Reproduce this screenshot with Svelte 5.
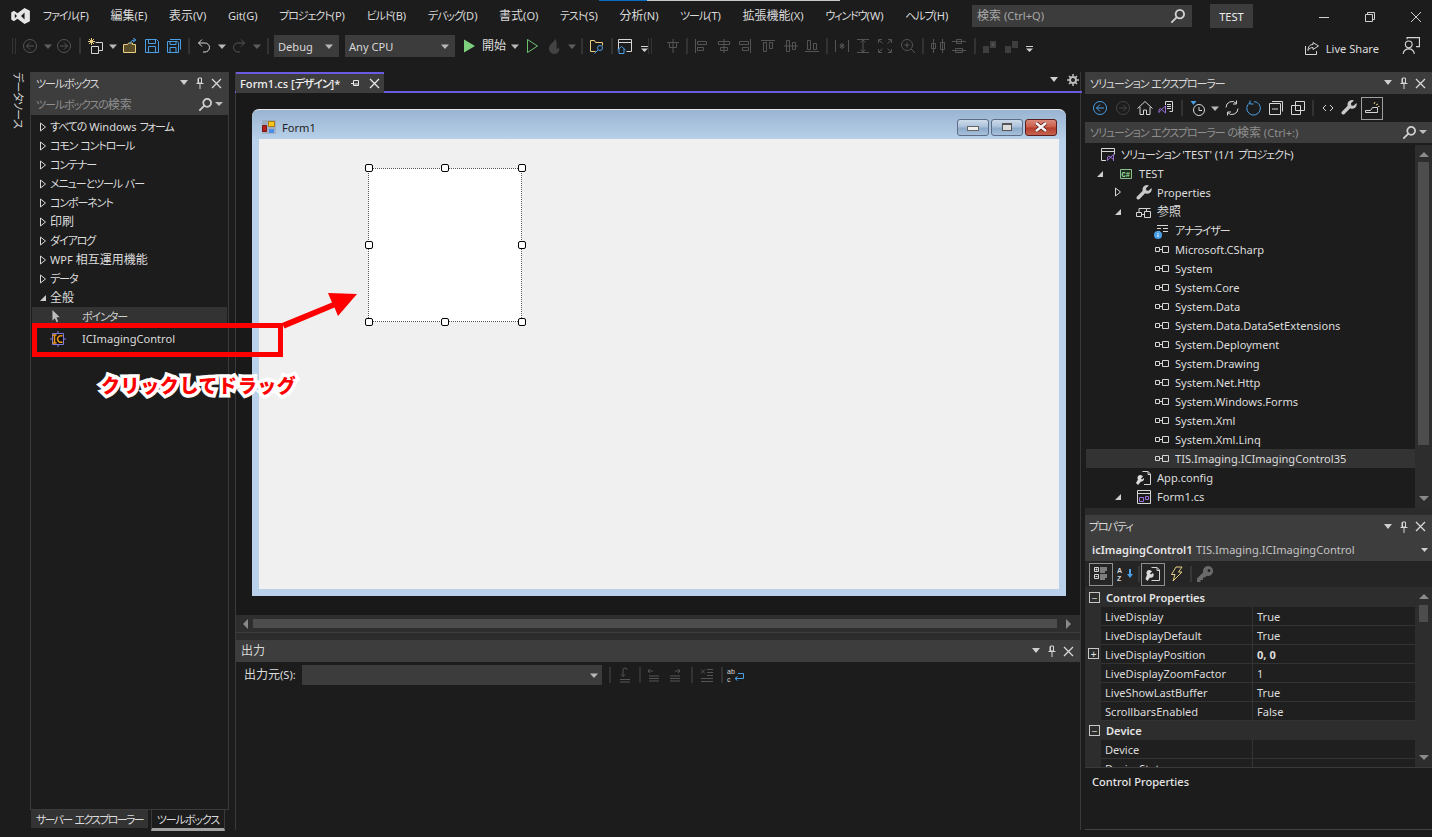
<script>
  const W = '#d6d6d6', D = '#545454', B = '#4a9fe6', Y = '#e9cf82', P = '#9b6fd8', G = '#6cc36c';

  const dots = Array.from({ length: 8 }, (_, i) => `M1 ${i * 2 + 1}h1M4 ${i * 2 + 1}h1`).join('');

  // each icon: list of [stroke, fill, d] in a 16x16 box
  const ico = {
    back: [[D, 'none', 'M14.5 8a6.5 6.5 0 1 1-13 0a6.5 6.5 0 1 1 13 0zM12 8H4.5M8 4.5L4.5 8 8 11.5']],
    fwd: [[D, 'none', 'M14.5 8a6.5 6.5 0 1 1-13 0a6.5 6.5 0 1 1 13 0zM4 8h7.5M8 4.5L11.5 8 8 11.5']],
    backB: [[B, 'none', 'M14.5 8a6.5 6.5 0 1 1-13 0a6.5 6.5 0 1 1 13 0zM12 8H4.5M8 4.5L4.5 8 8 11.5']],
    fwdD: [['#444', 'none', 'M14.5 8a6.5 6.5 0 1 1-13 0a6.5 6.5 0 1 1 13 0zM4 8h7.5M8 4.5L11.5 8 8 11.5']],
    arr: [['none', '#b8b8b8', 'M4 6.5h8L8 11z']],
    arrD: [['none', '#5e5e5e', 'M4 6.5h8L8 11z']],
    dd: [['#cfcfcf', 'none', 'M4 8.5h7'], ['none', '#cfcfcf', 'M4 10.5h7L7.5 14z']],
    grip: [['#4d4d4d', 'none', dots]],
    sep: [['#4a4a4a', 'none', 'M8 0v16']],
    newp: [[Y, 'none', 'M3.5 0v7M0 3.5h7M1 1l5 5M6 1L1 6'], [W, 'none', 'M7.5 4.5h7v8h-4M3.5 8.5h7v7h-7z']],
    open: [[Y, '#5a4d28', 'M1.5 14.5v-8h4l1-1.5h4v1.5h3v8z'], [B, 'none', 'M8 6c0-2.5 2-4 5-4M11 0l3 2-3 2']],
    save: [[B, 'none', 'M1.5 1.5h11l2 2v11h-13zM4.5 1.5v4h7v-4M4.5 14.5v-6h7v6']],
    saveall: [[B, 'none', 'M1.5 3.5h10l1 1v10h-11zM4 3.5v3h6v-3M4 14.5v-5h6v5M4 1.5h10.5v10']],
    undo: [[W, 'none', 'M6 1.5L2.5 5 6 8.5M2.5 5h6.5a4.5 4.5 0 0 1 0 9H7']],
    redo: [[D, 'none', 'M10 1.5L13.5 5 10 8.5M13.5 5H7a4.5 4.5 0 0 0 0 9h2']],
    play: [['none', '#7ed07e', 'M3 1.5L14 8 3 14.5z']],
    playo: [[G, 'none', 'M3.5 1.5L13.5 8 3.5 14.5z']],
    flame: [['none', '#434343', 'M9 0c1 3.5-5 5-6 9.5C2.5 13 5 16 8.5 16s5.5-3 4.5-7c-.5 1.5-1.5 2-2.5 1.5C11 7 11 3 9 0z']],
    findf: [[Y, 'none', 'M1.5 13.5v-11h4l1 2h7v3M1.5 13.5h5'], [B, 'none', 'M13.5 10a2.5 2.5 0 1 1-5 0a2.5 2.5 0 1 1 5 0zM9 12l-3.5 3.5']],
    formh: [[W, 'none', 'M1.5 11V1.5h13v12h-5M1.5 4.5h13'], [B, 'none', 'M.5 12L4.5 8.5 8.5 12M2 11v4.5h5V11']],
    tab: [[D, 'none', 'M8 1v14M2 4.5h12M4.5 4.5v5h7v-5']],
    a1: [[D, 'none', 'M2.5 1v14M4.5 3.5h9v3h-9zM4.5 9.5h6v3h-6z']],
    a2: [[D, 'none', 'M8 1v14M2.5 3.5h11v3h-11zM4.5 9.5h7v3h-7z']],
    a3: [[D, 'none', 'M13.5 1v14M2.5 3.5h9v3h-9zM5.5 9.5h6v3h-6z']],
    a4: [[D, 'none', 'M1 2.5h14M3.5 4.5v9h3v-9zM9.5 4.5v6h3v-6z']],
    a5: [[D, 'none', 'M1 8h14M3.5 2.5v11h3v-11zM9.5 4.5v7h3v-7z']],
    a6: [[D, 'none', 'M1 13.5h14M3.5 2.5v9h3v-9zM9.5 5.5v6h3v-6z']],
    b1: [[D, 'none', 'M1.5 2v12M14.5 2v12M8 5v6M5.5 8h5M6 6l4 4M10 6l-4 4']],
    b2: [[D, 'none', 'M2 1.5h12M2 14.5h12M8 2v12M5.5 4.5L8 2l2.5 2.5M5.5 11.5L8 14l2.5-2.5']],
    b3: [[D, 'none', 'M1.5 5V1.5H5M11 1.5h3.5V5M14.5 11v3.5H11M5 14.5H1.5V11M2 2l3.5 3.5M14 2l-3.5 3.5M2 14l3.5-3.5M14 14l-3.5-3.5']],
    b4: [[D, 'none', 'M12.5 7a5.5 5.5 0 1 1-11 0a5.5 5.5 0 1 1 11 0zM11 11l4 4M4.5 7h5M7 4.5v5']],
    c1: [[D, 'none', 'M3.5 1v14M12.5 1v14M1.5 5.5h4v5h-4zM10.5 4.5h4v7h-4z']],
    c2: [[D, 'none', 'M1 3.5h14M1 12.5h14M5.5 1.5v4h5v-4zM4.5 10.5v4h7v-4z']],
    o1: [['none', '#3e3e3e', 'M1 8h6v7H1zM8 3h6v7H8z'], ['#555', 'none', 'M10 5.5h2v2h-2z']],
    o2: [['none', '#3e3e3e', 'M1 8h6v7H1zM8 3h6v7H8z']],
    share: [[W, 'none', 'M9 2.5l5.5 3.5L9 9.5V7.5c-2.5 0-4 1-5 3 0-3.5 1.5-6 5-6zM1.5 6v8.5h11V11']],
    feed: [[W, 'none', 'M3 6.5a3 3 0 1 1 6 0a3 3 0 1 1-6 0zM1 15c.5-3 2-4.5 5-4.5s4.5 1.5 5 4.5M4.5 2V.5h11v8h-3']],
    home: [[W, 'none', 'M.5 8.5L8 1.5l7.5 7M3 7v7.5h3.5V10h3v4.5H13V7']],
    vsdocB: [[W, 'none', 'M7.5 5V1.5h7v10h-3M9 4.5h4M9 6.5h4M9 8.5h4'], [P, 'none', 'M1 9.5l1.5-1 5 4.5v-7l-5 4.5L1 12.5zM7.5 6v7']],
    hist: [[W, 'none', 'M14.5 10a5.5 5.5 0 1 1-11 0a5.5 5.5 0 1 1 11 0zM9 7v3.5h3'], ['none', B, 'M.5 1h6L3.5 5z']],
    sync: [[W, 'none', 'M2 7.5a6 6 0 0 1 10.5-4M14 8.5a6 6 0 0 1-10.5 4M12.5.5V4H9M3.5 15.5V12H7']],
    refresh: [[B, 'none', 'M4 2.5a6.8 6.8 0 1 0 4-1M4 .5V4h3.5']],
    coll: [[W, 'none', 'M1.5 3.5h11v11h-11zM4 9h6M4 1.5h10.5v10']],
    copy: [[W, 'none', 'M5.5 1.5h9v9h-9zM1.5 5.5h9v9h-9z']],
    code: [[W, 'none', 'M6 5L3 8l3 3M10 5l3 3-3 3']],
    wrench: [['none', '#c8c8c8', 'M11 0a4.5 4.5 0 0 0-4.3 5.8L.8 11.7a1.8 1.8 0 0 0 2.5 2.5l5.9-5.9A4.5 4.5 0 0 0 15.5 3l-3 2.8-2.2-.3-.3-2.2L13 .5A4.500 4.500 0 0 0 11 0z']],
    toggle: [[W, 'none', 'M1.5 10.5h5l2-3h5v3M1.5 10.5v2h12v-2'], [Y, 'none', 'M12 5l2-1M10 4l1-2M14 6.5h1.5']],
    key: [['none', '#6a6a6a', 'M11 0a5 5 0 0 0-4.8 6.300L0 12.500V16h3.500v-2H6v-2.500h2l1.700-1.700A5 5 0 1 0 11 0zm1 3a1.500 1.500 0 1 1 0 3 1.500 1.500 0 0 1 0-3z']],
    cat: [[W, 'none', 'M1.5 1.5h4v4h-4zM1.5 8.5h4v4h-4zM3.5 2.5v2M2.5 3.5h2M2.5 10.5h2M7 2h7M7 4h7M7 6h5M7 9h7M7 11h7M7 13h5']],
    propw: [[W, 'none', 'M6.5 1.5H12l2.5 2.5v10.5h-8M12 1.5v3h2.5'], ['none', '#dcdcdc', 'M4 4a2.800 2.800 0 0 0-2 4.500L.5 13l2 2 2.500-3.500A2.800 2.800 0 0 0 8 7L6 8.500 5 7.500 7 5.500A3 3 0 0 0 4 4z']],
    flash: [[Y, 'none', 'M8 1h6l-3.5 5H14L5 15l2-6.5H3.500z']],
    o_a: [[D, 'none', 'M3 15h10M3 12.5h10M6 9.5V3a2 2 0 0 1 4 0M4 7.5L6 9.5l2-2']],
    o_b: [[D, 'none', 'M3 14h10M3 11.5h10M3 9h10M7 4H2M4 2L2 4l2 2']],
    o_c: [[D, 'none', 'M3 14h10M3 11.5h10M3 9h10M8 4h5M11 2l2 2-2 2']],
    o_d: [[D, 'none', 'M2 14.5h12M2 11.5h12M8 8.5h6M8 5.5h6M8 2.5h6M2 2.5l4 4M6 2.5l-4 4']],
    depr: [[W, 'none', 'M.5 8.5h5v4h-5zM8.5 7.5h6v6h-6zM5.5 10.5h3M3 8.5v-4h7.5v3M10.5 4.5h4']],
    ref: [[W, 'none', 'M1.5 5.5h4v4h-4zM5.5 7.5h3M8.5 4.5h6v6h-6z']],
    anl: [[W, 'none', 'M3 2.5h11M3 5.5h4M9 5.5h5M3 8.5h3M9 8.5h5'], ['none', B, 'M8 12a4 4 0 1 1-8 0a4 4 0 1 1 8 0z'], ['#fff', 'none', 'M4 10v.8M4 11.5V14']],
    cfg: [[W, 'none', 'M6.5 1.5H12l2.5 2.5v10.5H8M12 1.5v3h2.5'], ['none', '#dcdcdc', 'M4 5a2.800 2.800 0 0 0-2 4.500L0 13l2 2 3-3.500A2.800 2.800 0 0 0 8 8L6 9.500 5 8.500 7 6.500A3 3 0 0 0 4 5z']],
    formf: [[W, 'none', 'M1.5 1.5h13v13h-13zM1.5 4.5h13'], [P, 'none', 'M3.5 8.5h4v4h-4zM9.5 7.5h3v3h-3z']],
    sln: [[W, 'none', 'M6 13.5H1.5v-12h13v6M1.5 4.5h13'], [P, 'none', 'M7.5 10L9 9l4.5 3.5v-5L9 11.5l-1.500 2zM13.500 7.500V14']],
    cursor: [['none', '#bdbdbd', 'M3 0v13l3-3 2 5 2-1-2-5h4z']],
  };

  const tools = [
    ['back', 20], ['arrD', 16], ['fwd', 16], ['sep', 16], ['newp', 16], ['arr', 18], ['open', 16], ['save', 28],
    ['saveall', 16], ['sep', 14], ['undo', 16], ['arr', 20], ['redo', 14], ['arrD', 21], ['sep', 1]
  ];
  const tools2 = [
    ['arr', 20], ['playo', 14], ['flame', 30], ['arrD', 6], ['sep', 14], ['findf', 16], ['sep', 14], ['formh', 12],
    [null, 10], ['dd', 8], ['grip', 12], ['tab', 24], ['sep', 4], ['a1', 24], ['a2', 22], ['a3', 20], ['a4', 25], ['a5', 22],
    ['a6', 20], ['sep', 10], ['b1', 20], ['b2', 22], ['b3', 22], ['b4', 23], ['sep', 8], ['c1', 22], ['c2', 20], ['sep', 12],
    ['o1', 18], ['o2', 26], ['dd', 10]
  ];
  const seTools = [
    ['backB', 16], ['fwdD', 30], ['home', 14], ['vsdocB', 28], ['sep', 4], ['hist', 28], ['arr', 6], ['sync', 28],
    ['refresh', 16], ['coll', 28], ['copy', 16], ['sep', 14], ['code', 16], ['wrench', 25]
  ];
  const outTools = [['sep', 1], ['o_a', 29], ['sep', 1], ['o_b', 28], ['o_c', 14], [null, 9], ['sep', 1], ['o_d', 29], ['sep', 1]];

  const menus = ['ファイル(F)', '編集(E)', '表示(V)', 'Git(G)', 'プロジェクト(P)', 'ビルド(B)', 'デバッグ(D)', '書式(O)',
    'テスト(S)', '分析(N)', 'ツール(T)', '拡張機能(X)', 'ウィンドウ(W)', 'ヘルプ(H)'];

  const boxCats = ['すべての Windows フォーム', 'コモン コントロール', 'コンテナー', 'メニューとツール バー', 'コンポーネント',
    '印刷', 'ダイアログ', 'WPF 相互運用機能', 'データ'];

  const refs = ['Microsoft.CSharp', 'System', 'System.Core', 'System.Data', 'System.Data.DataSetExtensions', 'System.Deployment',
    'System.Drawing', 'System.Net.Http', 'System.Windows.Forms', 'System.Xml', 'System.Xml.Linq', 'TIS.Imaging.ICImagingControl35'];

  const tree = [
    { lv: 0, icon: 'sln', t: "ソリューション 'TEST' (1/1 プロジェクト)" },
    { lv: 1, open: true, icon: 'cs', t: 'TEST' },
    { lv: 2, closed: true, icon: 'wrench', t: 'Properties' },
    { lv: 2, open: true, icon: 'depr', t: '参照' },
    { lv: 3, icon: 'anl', t: 'アナライザー' },
    ...refs.map((t) => ({ lv: 3, icon: 'ref', t, sel: t.startsWith('TIS') })),
    { lv: 2, icon: 'cfg', t: 'App.config' },
    { lv: 2, open: true, icon: 'formf', t: 'Form1.cs' },
  ];

  const props = [
    { sec: 'Control Properties' },
    { n: 'LiveDisplay', v: 'True' },
    { n: 'LiveDisplayDefault', v: 'True' },
    { n: 'LiveDisplayPosition', v: '0, 0', bold: true, plus: true },
    { n: 'LiveDisplayZoomFactor', v: '1' },
    { n: 'LiveShowLastBuffer', v: 'True' },
    { n: 'ScrollbarsEnabled', v: 'False' },
    { sec: 'Device' },
    { n: 'Device', v: '' },
    { n: 'DeviceState', v: '' },
  ];

  const handles = ['tl', 'tc', 'tr', 'ml', 'mr', 'bl', 'bc', 'br'];

  // the reference's UI font has compact kana, so kana runs get their own size
  function runs(s) {
    return s.split(/([\u3040-\u30ff]+|[\u4e00-\u9fff]+)/).filter(Boolean).map((p) => {
      if (/[\u3040-\u30ff]/.test(p)) return ['k', p];
      if (/[\u4e00-\u9fff]/.test(p)) return ['h', p];
      return ['', p];
    });
  }
</script>

{#snippet t(text)}
  <span class="tx">{#each runs(text) as [c, p]}<span class={c}>{p}</span>{/each}</span>
{/snippet}

{#snippet icon(name, size = 16)}
  <svg class="ic" width={size} height={size} viewBox="0 0 16 16">
    {#each ico[name] as [s, f, d]}
      <path stroke={s} fill={f} {d} />
    {/each}
  </svg>
{/snippet}

{#snippet bar(list)}
  {#each list as [name, w]}
    <span class="slot" style="width:{w}px">
      {#if name}{@render icon(name)}{/if}
    </span>
  {/each}
{/snippet}

{#snippet caption()}
  <span class="caps">
    <svg width="10" height="6" viewBox="0 0 10 6"><path d="M1 0h8L5 5z" fill="#cfcfcf" /></svg>
    <svg width="10" height="12" viewBox="0 0 10 12"><path d="M3.5 1h3v5h-3zM1.5 6.5h7M5 7v5M3 1.5v5" stroke="#d8d8d8" fill="none" /></svg>
    <svg width="11" height="11" viewBox="0 0 11 11"><path d="M1 1l9 9M10 1l-9 9" stroke="#d8d8d8" stroke-width="1.3" /></svg>
  </span>
{/snippet}

{#snippet opened()}
  <svg class="exp" width="8" height="8" viewBox="0 0 8 8"><path d="M7 1v6H1z" fill="#cfcfcf" /></svg>
{/snippet}

{#snippet closed()}
  <svg class="exp" width="8" height="10" viewBox="0 0 8 10"><path d="M1.5 1l5 4-5 4z" fill="none" stroke="#d8d8d8" /></svg>
{/snippet}

{#snippet sarrow(dir)}
  <svg width="10" height="7" viewBox="0 0 10 7"><path d={dir === 'up' ? 'M0 6l5-5 5 5z' : 'M0 1h10L5 6z'} fill="#8a8a8a" /></svg>
{/snippet}

{#snippet findIcon()}
  <span class="find">
    <svg width="14" height="14" viewBox="0 0 16 16"><path d="M15 5.5a4.5 4.5 0 1 1-9 0a4.5 4.5 0 1 1 9 0zM7 9l-5.5 5.5" stroke="#d0d0d0" stroke-width="2" fill="none" /></svg>
    <svg width="8" height="5" viewBox="0 0 8 5"><path d="M0 0h8L4 4z" fill="#bdbdbd" /></svg>
  </span>
{/snippet}

<div class="app">
  <header class="titlebar">
    <svg class="logo" width="20" height="16" viewBox="0 0 22 18">
      <path d="M0 5l3-2 4 3L15 0l6 3v12l-6 3-8-6-4 3-3-2zM4 6.5v5l2.5-2.5zM15 5l-4 4 4 4z" fill="#e6e6e6" fill-rule="evenodd" />
    </svg>
    <nav class="menu">
      {#each menus as m}<span class="mi">{@render t(m)}</span>{/each}
    </nav>
    <div class="qsearch">
      {@render t('検索 (Ctrl+Q)')}
      <svg width="15" height="15" viewBox="0 0 16 16"><path d="M15 5.5a4.5 4.5 0 1 1-9 0a4.5 4.5 0 1 1 9 0zM7 9l-5.5 5.5" stroke="#d0d0d0" stroke-width="2" fill="none" /></svg>
    </div>
    <div class="sol">{@render t('TEST')}</div>
    <div class="winctl">
      <svg width="12" height="12" viewBox="0 0 12 12"><path d="M1 6.5h10" stroke="#d0d0d0" /></svg>
      <svg width="12" height="12" viewBox="0 0 12 12"><path d="M1.5 3.5h7v7h-7zM3.5 3V1.5h7v7H9" stroke="#d0d0d0" fill="none" /></svg>
      <svg width="12" height="12" viewBox="0 0 12 12"><path d="M1 1l10 10M11 1L1 11" stroke="#d0d0d0" /></svg>
    </div>
    <i class="progress"></i>
  </header>

  <div class="toolbar">
    <span class="slot grip">{@render icon('grip')}</span>
    {@render bar(tools)}
    <div class="combo debug">{@render t('Debug')}{@render icon('arr')}</div>
    <div class="combo cpu">{@render t('Any CPU')}{@render icon('arr')}</div>
    <span class="slot" style="width:27px">{@render icon('play')}</span>
    <span class="start">{@render t('開始')}</span>
    {@render bar(tools2)}
    <div class="live">
      {@render icon('share')}
      {@render t('Live Share')}
      <span class="feed">{@render icon('feed', 18)}</span>
    </div>
  </div>

  <main class="main">
    <div class="strip"><span class="vert">{#each runs('データソース') as [c, p]}<span class={c}>{p}</span>{/each}</span></div>

    <section class="left">
      <div class="boxed">
        <div class="phead">{@render t('ツールボックス')}{@render caption()}</div>
        <div class="psearch">{@render t('ツールボックスの検索')}{@render findIcon()}</div>
        <div class="boxtree">
          {#each boxCats as c}
            <div class="brow">{@render closed()}{@render t(c)}</div>
          {/each}
          <div class="brow">{@render opened()}{@render t('全般')}</div>
          <div class="bitem pointer"><span class="bicon">{@render icon('cursor', 13)}</span>{@render t('ポインター')}</div>
          <div class="bitem big">
            <span class="bicon">
              <svg width="16" height="16" viewBox="0 0 16 16">
                <path d="M2.5 2.5h11v11h-11zM8 0v2M8 14v2M0 8h2M14 8h2" fill="#111" stroke="#7c7ce0" />
                <path d="M4.5 4v8M6.5 12h-4M6.5 4h-4M12.5 5a3.5 3.5 0 0 0-5 3 3.5 3.5 0 0 0 5 3" stroke="#f09a1a" stroke-width="1.5" fill="none" />
              </svg>
            </span>
            {@render t('ICImagingControl')}
          </div>
        </div>
      </div>
      <div class="btabs">
        <span class="btab wide">{@render t('サーバー エクスプローラー')}</span>
        <span class="btab on">{@render t('ツールボックス')}</span>
      </div>
    </section>

    <section class="center">
      <div class="tabs">
        <div class="tab">
          <span class="tname">{@render t('Form1.cs [デザイン]*')}</span>
          <svg width="9" height="9" viewBox="0 0 9 9"><path d="M0 4.5h2.5M2.5 1.5h5v5h-5zM2.5 5h5" stroke="#e8e8e8" fill="none" /></svg>
          <svg width="11" height="11" viewBox="0 0 11 11"><path d="M1 1l9 9M10 1l-9 9" stroke="#e8e8e8" stroke-width="1.3" /></svg>
        </div>
        <div class="tabtools">
          <svg width="10" height="6" viewBox="0 0 10 6"><path d="M1 0h8L5 5z" fill="#cfcfcf" /></svg>
          <svg width="12" height="12" viewBox="0 0 12 12"><circle cx="6" cy="6" r="3" fill="none" stroke="#bdbdbd" stroke-width="2" /><path d="M6 0v2M6 10v2M0 6h2M10 6h2M2 2l1.5 1.5M10 2L8.5 3.5M2 10l1.5-1.5M10 10L8.5 8.5" stroke="#bdbdbd" stroke-width="1.5" /></svg>
        </div>
      </div>

      <div class="designer">
        <div class="form">
          <div class="ftitle">
            <svg width="15" height="14" viewBox="0 0 15 14">
              <path d="M0 0h14v14H0z" fill="#888" opacity=".35" />
              <path d="M6.5 1.5h6v5h-6z" fill="#f5c518" stroke="#a9781a" />
              <path d="M.5 5.5h4v6h-4z" fill="#b8201e" stroke="#7a1513" />
              <path d="M7 9h5v4H7z" fill="#4b8fe8" />
            </svg>
            <span class="fname">{@render t('Form1')}</span>
            <div class="fbtns">
              <span class="fbtn"><i class="fmin"></i></span>
              <span class="fbtn"><i class="fmax"></i></span>
              <span class="fbtn fclose">
                <svg width="16" height="10" viewBox="0 0 16 10"><path d="M3 1l10 8M13 1L3 9" stroke="#5a1510" stroke-width="4" /><path d="M3 1l10 8M13 1L3 9" stroke="#f5f5f5" stroke-width="2.6" /></svg>
              </span>
            </div>
          </div>
          <div class="client">
            <div class="control">
              {#each handles as h}<i class="handle {h}"></i>{/each}
            </div>
          </div>
        </div>
      </div>

      <div class="hscroll">
        <svg width="7" height="10" viewBox="0 0 7 10"><path d="M6 0v10L1 5z" fill="#8a8a8a" /></svg>
        <span class="hthumb"></span>
        <svg width="7" height="10" viewBox="0 0 7 10"><path d="M1 0v10l5-5z" fill="#8a8a8a" /></svg>
      </div>
      <div class="band"></div>

      <div class="output">
        <div class="phead">{@render t('出力')}{@render caption()}</div>
        <div class="otools">
          <span class="olabel">{@render t('出力元(S):')}</span>
          <div class="ocombo">{@render icon('arr')}</div>
          <div class="obar">
            {@render bar(outTools)}
            <span class="slot wrapico">
              <svg width="18" height="16" viewBox="0 0 18 16">
                <text x="0" y="6.5" class="mini">ab</text><text x="0" y="14.5" class="mini">c</text>
                <path d="M11 6.5h5.5v5H8M10.5 9.5L8 11.5l2.5 2" stroke={B} fill="none" />
              </svg>
            </span>
          </div>
        </div>
        <div class="obody"></div>
      </div>
    </section>

    <section class="right">
      <div class="se">
        <div class="phead">{@render t('ソリューション エクスプローラー')}{@render caption()}</div>
        <div class="setools">
          {@render bar(seTools)}
          <span class="active">{@render icon('toggle')}</span>
        </div>
        <div class="psearch">{@render t('ソリューション エクスプローラー の検索 (Ctrl+:)')}{@render findIcon()}</div>
        <div class="setree">
          <div class="serows">
            {#each tree as r}
              <div class="srow" class:sel={r.sel} style="padding-left:{r.lv ? 18 * r.lv - 10 : 14}px">
                {#if r.lv}
                  <span class="sexp">{#if r.open}{@render opened()}{:else if r.closed}{@render closed()}{/if}</span>
                {/if}
                {#if r.icon === 'cs'}
                  <svg class="ic" width="16" height="16" viewBox="0 0 16 16">
                    <path d="M2.5 3.5h11v9h-11z" fill="#1e2e1e" stroke="#8fbf8f" />
                    <text x="3.5" y="10.5" class="csharp">C#</text>
                  </svg>
                {:else}
                  {@render icon(r.icon)}
                {/if}
                <span class="stext">{@render t(r.t)}</span>
              </div>
            {/each}
          </div>
          <div class="vscroll">
            {@render sarrow('up')}
            <span class="vthumb long"></span>
            {@render sarrow('down')}
          </div>
        </div>
      </div>
      <div class="band"></div>
      <div class="props">
        <div class="phead tall">{@render t('プロパティ')}{@render caption()}</div>
        <div class="pselect">
          <b>{@render t('icImagingControl1')}</b>
          <span class="ptype">{@render t('TIS.Imaging.ICImagingControl')}</span>
          <svg width="7" height="4" viewBox="0 0 7 4"><path d="M0 0h7L3.5 4z" fill="#cfcfcf" /></svg>
        </div>
        <div class="ptools">
          <span class="pbox">{@render icon('cat')}</span>
          <span class="slot az">
            <svg width="18" height="16" viewBox="0 0 18 16">
              <text x="1" y="7" class="azt">A</text><text x="1" y="15" class="azt">Z</text>
              <path d="M11 8h2V3h2v5h2l-3 4z" fill={B} />
            </svg>
          </span>
          <span class="slot psep">{@render icon('sep')}</span>
          <span class="pbox">{@render icon('propw')}</span>
          <span class="slot" style="width:22px">{@render icon('flash')}</span>
          <span class="slot" style="width:8px">{@render icon('sep')}</span>
          <span class="slot" style="width:20px">{@render icon('key')}</span>
        </div>
        <div class="pgrid">
          <div class="plist">
            {#each props as p}
              {#if p.sec}
                <div class="psec"><span class="tog">−</span><b>{@render t(p.sec)}</b></div>
              {:else}
                <div class="prow">
                  {#if p.plus}<span class="tog plus">+</span>{/if}
                  <span class="pn">{@render t(p.n)}</span>
                  <span class="pv" class:strong={p.bold}>{@render t(p.v)}</span>
                </div>
              {/if}
            {/each}
          </div>
          <div class="vscroll">
            {@render sarrow('up')}
            <span class="vthumb"></span>
            {@render sarrow('down')}
          </div>
        </div>
        <div class="pdesc"><b>{@render t('Control Properties')}</b></div>
      </div>
    </section>
  </main>

  <svg class="overlay" width="1432" height="837" viewBox="0 0 1432 837">
    <path d="M34.5 325.5h246v29h-246z" fill="none" stroke="#ff0000" stroke-width="5" />
    <path d="M282 323l50-20.5-4-9.5 29 1-19 22-3.5-8.5-50 21z" fill="#ff0000" />
  </svg>
  <div class="callout">クリックしてドラッグ</div>
</div>

<style>
  :global(body) {
    margin: 0;
    background: #1c1c1c;
  }
  .app {
    position: relative;
    width: 1432px;
    height: 837px;
    overflow: hidden;
    display: flex;
    flex-direction: column;
    background: #1c1c1c;
    color: #dcdcdc;
    font: 11.1px/1.2 "Noto Sans", "Noto Sans CJK JP", sans-serif;
    font-feature-settings: "palt";
  }
  .tx {
    display: inline-block;
    padding-top: 1px;
    white-space: nowrap;
  }
  .k { font-size: 11px; letter-spacing: -1.1px; }
  .h { font-size: 12px; }
  .ic { display: block; flex: none; fill: none; }
  .slot {
    display: flex;
    align-items: center;
    justify-content: center;
    flex: none;
    height: 16px;
  }

  .titlebar {
    position: relative;
    height: 32px;
    flex: none;
    display: flex;
    align-items: center;
  }
  .logo { margin-left: 11px; flex: none; }
  .menu { display: flex; margin-left: 1px; width: 940px; }
  .mi { padding: 0 10.8px; white-space: nowrap; color: #dadada; }
  .qsearch {
    position: absolute;
    left: 972px;
    top: 5px;
    width: 220px;
    height: 22px;
    box-sizing: border-box;
    padding: 0 7px 0 5px;
    background: #3c3c3c;
    color: #a8a8a8;
    display: flex;
    align-items: center;
    justify-content: space-between;
  }
  .sol {
    position: absolute;
    left: 1210px;
    top: 4px;
    width: 43px;
    height: 24px;
    background: #3c3c3c;
    color: #ececec;
    display: flex;
    align-items: center;
    justify-content: center;
  }
  .winctl {
    position: absolute;
    right: 10px;
    top: 11px;
    display: flex;
    gap: 34px;
  }
  .progress {
    position: absolute;
    left: 599px;
    top: 0;
    width: 241px;
    height: 1px;
    background: linear-gradient(90deg, #0a6cc4 48px, #c8c8c8 48px);
  }

  .toolbar {
    height: 32px;
    flex: none;
    display: flex;
    align-items: center;
    padding-left: 11px;
    margin-top: -2px;
  }
  .grip { width: 9px; justify-content: flex-start; }
  .combo {
    display: flex;
    align-items: center;
    justify-content: space-between;
    box-sizing: border-box;
    height: 22px;
    padding: 0 2px 0 4px;
    background: #3c3c3c;
    color: #d8d8d8;
    flex: none;
  }
  .debug { width: 65px; margin-left: 6px; }
  .cpu { width: 110px; margin-left: 6px; }
  .start { width: 23px; flex: none; white-space: nowrap; }
  .live {
    margin-left: auto;
    margin-top: 4px;
    display: flex;
    align-items: center;
    gap: 6px;
    padding-right: 12px;
    color: #dcdcdc;
  }
  .feed { margin-left: 17px; margin-top: -4px; }

  .main {
    flex: 1;
    display: flex;
    padding: 10px 0 7px;
    min-height: 0;
  }
  .strip {
    width: 30px;
    flex: none;
    box-sizing: border-box;
    padding-left: 12px;
  }
  .vert {
    display: block;
    writing-mode: vertical-rl;
    text-orientation: sideways;
    color: #d4d4d4;
    white-space: nowrap;
  }
  .vert .k { letter-spacing: -.6px; }

  .phead {
    display: flex;
    align-items: center;
    justify-content: space-between;
    height: 22px;
    flex: none;
    padding: 0 5px;
    background: #3d3d3d;
    color: #d8d8d8;
    white-space: nowrap;
  }
  .phead.tall { height: 23px; padding-left: 4px; }
  .caps {
    display: flex;
    align-items: center;
    gap: 6px;
    padding-right: 1px;
  }
  .psearch {
    display: flex;
    align-items: center;
    justify-content: space-between;
    height: 21px;
    flex: none;
    padding: 0 5px;
    background: #3d3d3d;
    color: #8f8f8f;
    white-space: nowrap;
  }
  .find { display: flex; align-items: center; gap: 3px; }

  .left {
    width: 199px;
    flex: none;
    display: flex;
    flex-direction: column;
  }
  .boxed {
    flex: 1;
    min-height: 0;
    display: flex;
    flex-direction: column;
    border: 1px solid #3a3a3a;
    border-top: 0;
  }
  .boxtree { padding: 2px 1px 0; }
  .brow {
    height: 19px;
    display: flex;
    align-items: center;
    padding-left: 7px;
    gap: 3px;
    white-space: nowrap;
  }
  .exp { flex: none; }
  .bitem {
    height: 19px;
    display: flex;
    align-items: center;
    white-space: nowrap;
  }
  .bitem.pointer { background: #333333; color: #cfcfcf; }
  .bitem.big { height: 25px; }
  .bicon {
    width: 50px;
    padding-left: 18px;
    box-sizing: border-box;
    display: flex;
    flex: none;
  }
  .btabs {
    display: flex;
    height: 20px;
    flex: none;
    gap: 3px;
    padding-left: 1px;
  }
  .btab {
    display: flex;
    align-items: center;
    padding: 0 5px;
    height: 18px;
    background: #333333;
    white-space: nowrap;
  }
  .btab.wide .k { letter-spacing: -1.7px; }
  .btab.on {
    background: #1c1c1c;
    border: 1px solid #3a3a3a;
    border-top: 0;
    border-bottom: 3px solid #a0a0a0;
  }

  .center {
    width: 846px;
    flex: none;
    margin-left: 6px;
    display: flex;
    flex-direction: column;
    border-left: 1px solid #3a3a3a;
    border-right: 1px solid #3a3a3a;
    box-sizing: border-box;
  }
  .tabs {
    height: 21px;
    flex: none;
    display: flex;
    justify-content: space-between;
    border-bottom: 2px solid #6a5be0;
    box-sizing: border-box;
    margin-left: -1px;
    margin-right: -2px;
  }
  .tab {
    display: flex;
    align-items: center;
    gap: 9px;
    width: 148px;
    height: 21px;
    margin-left: 1px;
    box-sizing: border-box;
    border-top: 2px solid #6a5be0;
    background: #3d3d3d;
    color: #f0f0f0;
    padding: 0 4px;
    white-space: nowrap;
    font-weight: 500;
    flex: none;
  }
  .tab svg { flex: none; }
  .tname { flex: 1; }
  .tabtools {
    display: flex;
    align-items: center;
    gap: 8px;
    padding-right: 3px;
    height: 16px;
  }
  .designer {
    height: 522px;
    flex: none;
    box-sizing: border-box;
    background: #191919;
    padding: 16px 0 0 16px;
  }
  .form {
    width: 814px;
    height: 487px;
    box-sizing: border-box;
    border-top: 1px solid #e8e8e8;
    border-radius: 7px 7px 0 0;
    padding: 0 7px 7px;
    background: linear-gradient(#99b4d1, #b9d1ea 30px);
  }
  .ftitle {
    height: 29px;
    box-sizing: border-box;
    padding-top: 5px;
    display: flex;
    align-items: center;
    color: #222;
  }
  .ftitle > svg { margin-left: 3px; flex: none; }
  .fname { margin-left: 5px; }
  .fbtns {
    margin-left: auto;
    display: flex;
    gap: 2px;
    margin-right: 2px;
  }
  .fbtn {
    width: 30px;
    height: 15px;
    border: 1px solid #5d6b85;
    border-radius: 3px;
    background: linear-gradient(#cddbea 0, #a9c0da 48%, #8ca8c8 52%, #a7c1dc);
    display: flex;
    align-items: center;
    justify-content: center;
  }
  .fclose {
    border-color: #5b1d1d;
    background: linear-gradient(#dc8a7a, #c95c48 48%, #b53d2b 52%, #c66250);
  }
  .fmin {
    display: block;
    width: 10px;
    height: 3px;
    margin-top: 2px;
    background: #eee;
    border: 1px solid #666;
  }
  .fmax {
    display: block;
    width: 8px;
    height: 5px;
    background: #ddd;
    border: 1px solid #555;
    border-top-width: 2px;
  }
  .client {
    height: 450px;
    background: #f0f0f0;
    padding: 29px 0 0 109px;
    box-sizing: border-box;
  }
  .control {
    position: relative;
    width: 154px;
    height: 154px;
    box-sizing: border-box;
    background: #fff;
    outline: 1px dotted #555;
    outline-offset: -1px;
  }
  .handle {
    position: absolute;
    width: 6px;
    height: 6px;
    border: 1px solid #000;
    border-radius: 2px;
    background: #fff;
  }
  .tl, .tc, .tr { top: -4px; }
  .ml, .mr { top: 73px; }
  .bl, .bc, .br { bottom: -4px; }
  .tl, .ml, .bl { left: -3px; }
  .tc, .bc { left: 73px; }
  .tr, .mr, .br { right: -4px; }

  .hscroll {
    height: 18px;
    flex: none;
    box-sizing: border-box;
    display: flex;
    align-items: center;
    gap: 4px;
    padding: 0 8px 0 6px;
    background: #2e2e2e;
    border-bottom: 1px solid #3e3e3e;
  }
  .hthumb { flex: 1; height: 9px; background: #4d4d4d; margin-right: 4px; }
  .band { height: 7px; flex: none; background: #2b2b2b; }
  .output { flex: 1; min-height: 0; display: flex; flex-direction: column; }
  .otools {
    height: 26px;
    flex: none;
    display: flex;
    align-items: center;
    padding-left: 8px;
  }
  .olabel { width: 58px; flex: none; white-space: nowrap; }
  .ocombo {
    width: 300px;
    height: 20px;
    flex: none;
    background: #3c3c3c;
    display: flex;
    align-items: center;
    justify-content: flex-end;
  }
  .obar { display: flex; align-items: center; margin-left: 7px; }
  .wrapico { width: 28px; }
  .mini { font-size: 7px; fill: #d8d8d8; font-family: "Liberation Sans", sans-serif; }
  .obody { flex: 1; }

  .right {
    width: 347px;
    flex: none;
    margin-left: 4px;
    display: flex;
    flex-direction: column;
  }
  .se {
    height: 436px;
    flex: none;
    display: flex;
    flex-direction: column;
  }
  .setools {
    height: 28px;
    flex: none;
    display: flex;
    align-items: center;
    padding-left: 7px;
  }
  .active {
    width: 20px;
    height: 21px;
    flex: none;
    display: flex;
    align-items: center;
    justify-content: center;
    border: 1px solid #a0a0a0;
  }
  .setree {
    flex: 1;
    min-height: 0;
    display: flex;
    padding-top: 2px;
  }
  .serows { flex: 1; min-width: 0; padding-left: 1px; overflow: hidden; }
  .srow {
    height: 19px;
    display: flex;
    align-items: center;
    white-space: nowrap;
    box-sizing: border-box;
  }
  .srow.sel { background: #333333; }
  .sexp { width: 24px; flex: none; padding-left: 2px; box-sizing: border-box; }
  .stext { margin-left: 5px; }
  .csharp { font-size: 7px; font-weight: 700; fill: #a6e0a6; font-family: "Liberation Mono", monospace; }
  .vscroll {
    width: 17px;
    flex: none;
    background: #2d2d2d;
    display: flex;
    flex-direction: column;
    align-items: center;
    justify-content: space-between;
    padding: 6px 0;
    box-sizing: border-box;
    overflow: hidden;
  }
  .vthumb {
    width: 9px;
    height: 17px;
    background: #4d4d4d;
    margin: 5px 0 auto;
  }
  .vthumb.long { height: 283px; width: 11px; margin-top: 4px; }

  .props {
    flex: 1;
    min-height: 0;
    display: flex;
    flex-direction: column;
  }
  .pselect {
    height: 23px;
    flex: none;
    display: flex;
    align-items: center;
    padding: 0 4px 0 7px;
    background: #3d3d3d;
    white-space: nowrap;
  }
  .pselect b { font-weight: 600; width: 104px; color: #e6e6e6; flex: none; }
  .ptype { flex: 1; color: #c4c4c4; }
  .ptools {
    height: 26px;
    flex: none;
    display: flex;
    align-items: center;
    padding-left: 4px;
    background: #252526;
  }
  .pbox {
    width: 22px;
    height: 21px;
    flex: none;
    display: flex;
    align-items: center;
    justify-content: center;
    border: 1px solid #909090;
  }
  .az { width: 24px; }
  .psep { width: 4px; }
  .azt { font-size: 7px; font-weight: 700; fill: #d8d8d8; font-family: "Liberation Sans", sans-serif; }
  .pgrid {
    height: 180px;
    flex: none;
    display: flex;
    background: #2d2d2d;
    overflow: hidden;
  }
  .plist { flex: 1; min-width: 0; padding-top: 1px; }
  .psec {
    height: 19px;
    display: flex;
    align-items: center;
    gap: 6px;
    padding-left: 4px;
  }
  .psec b { font-weight: 600; color: #e6e6e6; }
  .tog {
    width: 9px;
    height: 9px;
    flex: none;
    border: 1px solid #c8c8c8;
    display: flex;
    align-items: center;
    justify-content: center;
    font-size: 10px;
    line-height: 1;
    color: #e0e0e0;
  }
  .prow {
    position: relative;
    height: 19px;
    margin-left: 16px;
    display: grid;
    grid-template-columns: 152px 1fr;
    align-items: center;
    box-sizing: border-box;
    background: #1f1f1f;
    border-bottom: 1px solid #333;
  }
  .tog.plus { position: absolute; left: -13px; top: 3px; }
  .pn { padding-left: 4px; height: 100%; display: flex; align-items: center; border-right: 1px solid #333; }
  .pv { padding-left: 4px; color: #dcdcdc; }
  .pv.strong { font-weight: 700; }
  .pdesc {
    flex: 1;
    padding: 6px 7px;
    border-top: 1px solid #3a3a3a;
    border-bottom: 1px solid #444;
  }
  .pdesc b { font-weight: 500; color: #e6e6e6; }

  .overlay { position: absolute; left: 0; top: 0; pointer-events: none; }
  .callout {
    position: absolute;
    left: 101px;
    top: 372px;
    font-size: 19px;
    font-weight: 900;
    letter-spacing: .6px;
    line-height: 26px;
    color: #f00;
    -webkit-text-stroke: 7px #fff;
    paint-order: stroke fill;
    font-family: "Noto Sans CJK JP", sans-serif;
    white-space: nowrap;
    font-feature-settings: normal;
  }
</style>
